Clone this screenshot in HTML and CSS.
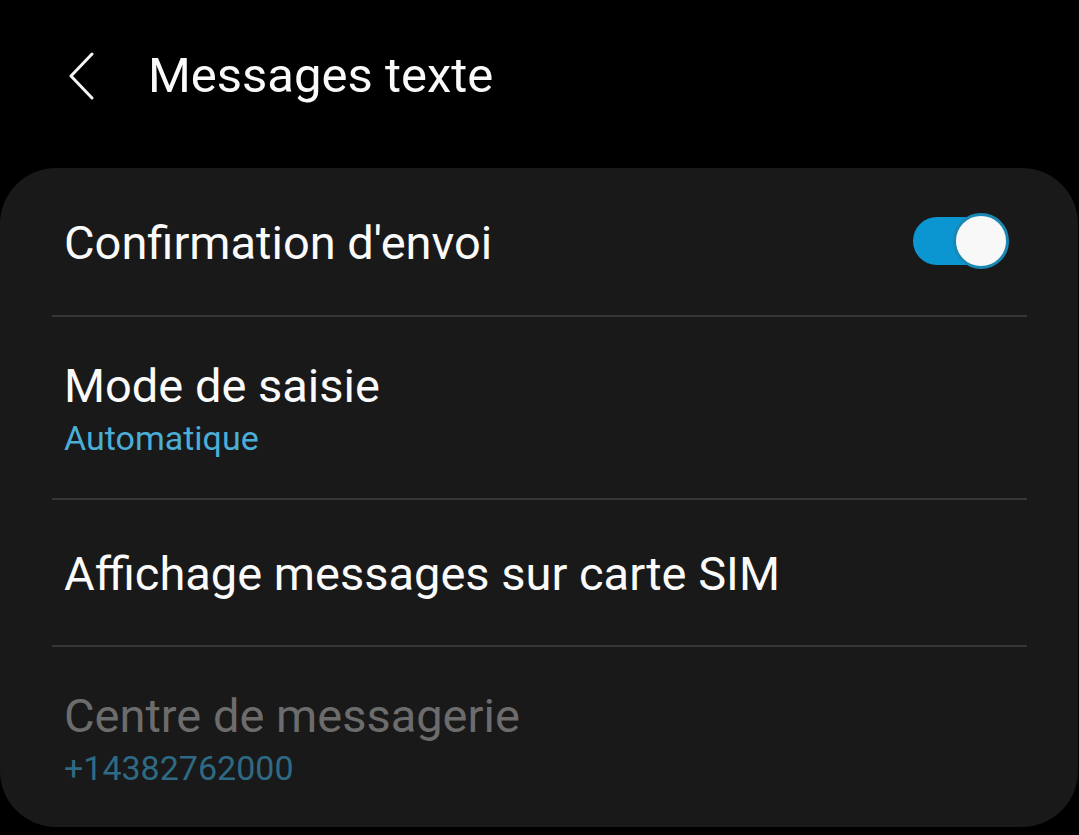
FILE: index.html
```html
<!DOCTYPE html>
<html lang="fr">
<head>
    <meta charset="UTF-8">
    <meta name="viewport" content="width=device-width, initial-scale=1.0">
    <title>Messages texte</title>
    <link rel="stylesheet" href="styles.css">
</head>
<body>

<div class="header">
    <button class="back-btn" aria-label="Retour">
        <svg width="26" height="48" viewBox="0 0 26 48">
            <polyline points="23,2 2,24 23,46" fill="none" stroke="#f5f5f5" stroke-width="3" stroke-linecap="round" stroke-linejoin="round"/>
        </svg>
    </button>
    <h1>Messages texte</h1>
</div>

<div class="card">
    <div class="row single first">
        <div class="row-text">
            <div class="row-title">Confirmation d'envoi</div>
        </div>
        <div class="switch on"><span class="thumb"></span></div>
    </div>
    <div class="divider"></div>

    <div class="row double">
        <div class="row-text">
            <div class="row-title">Mode de saisie</div>
            <div class="row-sub">Automatique</div>
        </div>
    </div>
    <div class="divider"></div>

    <div class="row single">
        <div class="row-text">
            <div class="row-title">Affichage messages sur carte SIM</div>
        </div>
    </div>
    <div class="divider"></div>

    <div class="row double disabled">
        <div class="row-text">
            <div class="row-title">Centre de messagerie</div>
            <div class="row-sub">+14382762000</div>
        </div>
    </div>
</div>

</body>
</html>
```

FILE: styles.css
```css
body {
    font-family: Roboto, "Noto Sans", sans-serif;
    background: #000;
    color: #fafafa;
    margin: 0;
    width: 1079px;
    height: 835px;
    overflow: hidden;
}
.header {
    display: flex;
    align-items: center;
    height: 168px;
    padding-left: 69px;
    box-sizing: border-box;
    padding-bottom: 16px;
}
.back-btn {
    background: none;
    border: none;
    padding: 0;
    width: 26px;
    height: 48px;
    display: flex;
    cursor: pointer;
}
.header h1 {
    margin: 0 0 0 53px;
    font-size: 49px;
    font-weight: 400;
    line-height: 58px;
    color: #fafafa;
}
.card {
    background: #191919;
    border-radius: 56px;
    width: 1078px;
    height: 659px;
    box-sizing: border-box;
}
.row {
    display: flex;
    align-items: center;
    padding-left: 64px;
    padding-right: 77px;
}
.row-text {
    flex: 1;
}
.row-title {
    font-size: 47px;
    line-height: 56px;
    color: #fafafa;
}
.row-sub {
    font-size: 34px;
    line-height: 40px;
    margin-top: 4px;
    color: #4aaed7;
}
.row.single {
    padding-top: 46px;
    padding-bottom: 43px;
}
.row.first {
    padding-top: 47px;
    padding-bottom: 44px;
}
.row.double {
    padding-top: 41px;
    padding-bottom: 40px;
}
.row.disabled .row-title {
    color: #6c6c6c;
}
.row.disabled .row-sub {
    color: #2f6a84;
}
.divider {
    height: 2px;
    background: #363636;
    margin: 0 51px 0 52px;
}
.switch {
    position: relative;
    width: 88px;
    height: 48px;
    border-radius: 24px;
    background: #0b95d1;
    margin-bottom: 4px;
}
.switch .thumb {
    position: absolute;
    top: -4px;
    right: -8px;
    width: 50px;
    height: 50px;
    border-radius: 50%;
    background: #f8f8f8;
    border: 3px solid #1b87b3;
}
```
